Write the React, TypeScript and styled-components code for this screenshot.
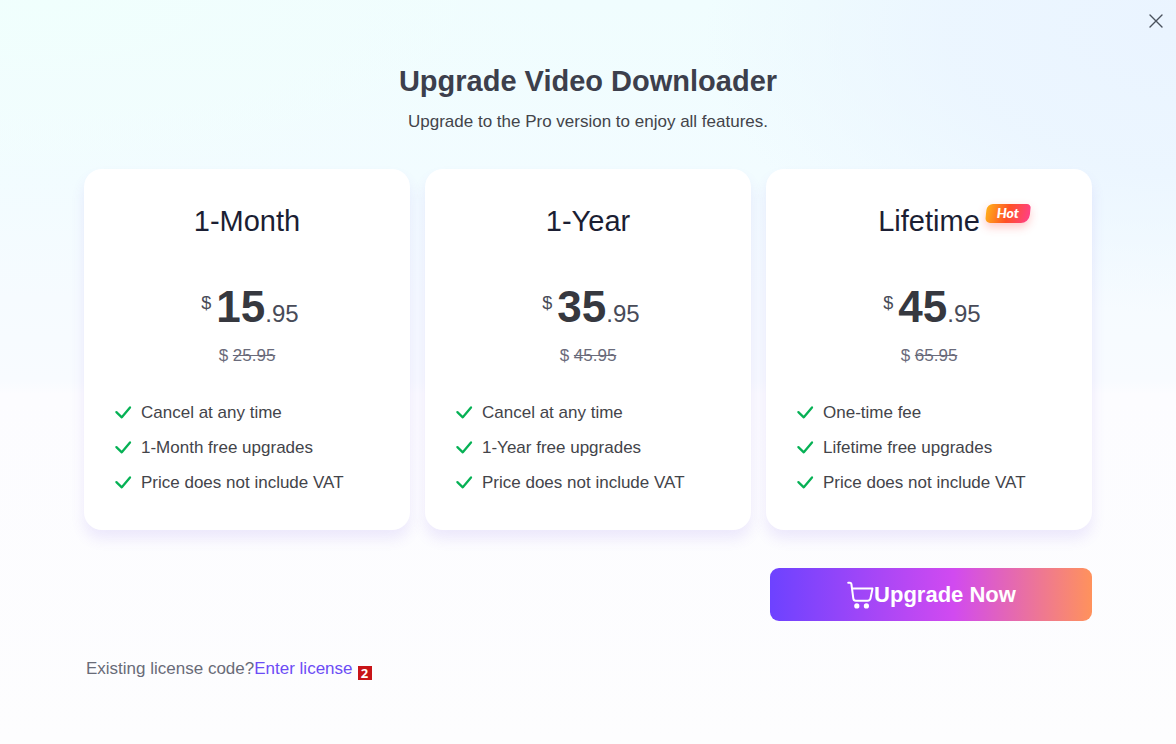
import React from "react";
import styled, { createGlobalStyle } from "styled-components";

const GlobalStyle = createGlobalStyle`
  *, *::before, *::after { box-sizing: border-box; }
  body {
    margin: 0;
    font-family: "Liberation Sans", Arial, sans-serif;
    color: #43444a;
  }
`;

const Page = styled.main`
  position: relative;
  min-height: 100vh;
  padding: 62px 84px 40px;
  background:
    radial-gradient(ellipse 40% 38% at 100% 4%, #eaf4ff 0%, #ebf5ffdd 50%, #f0f9ff00 100%),
    radial-gradient(ellipse 44% 26% at 4% 0%, #f0fffd 0%, #f1fefd99 50%, #f2fdff00 100%),
    linear-gradient(180deg, #f0fdfe 0%, #f2fcff 24%, #f6fbff 40%, #f8fbff 51%, #fcfcff 53%, #fdfdfe 100%);
`;

const CloseButton = styled.button`
  position: absolute;
  top: 9px;
  right: 8px;
  width: 24px;
  height: 24px;
  padding: 0;
  display: grid;
  place-items: center;
  border: 0;
  background: none;
  color: #4a515c;
  cursor: pointer;
`;

const Header = styled.header`
  text-align: center;
`;

const Title = styled.h1`
  margin: 0;
  font-size: 29px;
  line-height: 38px;
  font-weight: 700;
  color: #3c3f4c;
`;

const Subtitle = styled.p`
  margin: 10px 0 0;
  font-size: 17px;
  line-height: 24px;
`;

const Plans = styled.section`
  margin-top: 35px;
  display: grid;
  grid-template-columns: repeat(3, 1fr);
  gap: 15px;
`;

const Card = styled.article`
  padding: 34px 30px 35px;
  border-radius: 18px;
  background: #fff;
  box-shadow: 0 9px 14px rgba(107, 70, 225, 0.11);
`;

const PlanName = styled.h2`
  margin: 0;
  text-align: center;
  font-size: 29px;
  line-height: 36px;
  font-weight: 400;
  color: #1b1e33;
`;

const NameWrap = styled.span`
  position: relative;
`;

const HotBadge = styled.span`
  position: absolute;
  left: calc(100% + 6px);
  top: -1px;
  width: 44px;
  height: 19px;
  text-align: center;
  font: italic 900 14px/17px Lato, sans-serif;
  color: #fff;
  isolation: isolate;

  &::before {
    content: "";
    position: absolute;
    inset: 0;
    z-index: -1;
    transform: skewX(-6deg);
    border-radius: 6px 4px 8px 5px;
    background: linear-gradient(100deg, #ffb01a 0%, #ff5026 50%, #ff3f8b 100%);
    box-shadow: 0 4px 10px rgba(255, 70, 70, 0.3);
  }
`;

const Price = styled.p`
  height: 52px;
  margin: 42px 0 0;
  padding-left: 6px;
  display: flex;
  justify-content: center;
  align-items: baseline;
  line-height: 52px;
  color: #484b58;
`;

const Currency = styled.span`
  align-self: flex-start;
  margin-right: 5px;
  font-size: 18px;
  line-height: 44px;
`;

const Whole = styled.strong`
  font-size: 44px;
  color: #36383f;
`;

const Cents = styled.span`
  font-size: 24px;
`;

const OldPrice = styled.p`
  margin: 11px 0 0;
  text-align: center;
  font-size: 17px;
  line-height: 24px;
  color: #6a6b7b;
`;

const Features = styled.ul`
  margin: 33px 0 0;
  padding: 0;
  display: grid;
  gap: 11px;
  list-style: none;
`;

const Feature = styled.li`
  display: flex;
  align-items: center;
  gap: 9px;
  font-size: 17px;
  line-height: 24px;
`;

const Actions = styled.div`
  margin-top: 38px;
  display: flex;
  justify-content: flex-end;
`;

const UpgradeButton = styled.button`
  width: 322px;
  height: 53px;
  padding: 0;
  display: flex;
  align-items: center;
  justify-content: center;
  border: 0;
  border-radius: 9px;
  background: linear-gradient(90deg, #6d42ff 0%, #d14af0 57%, #ff925c 100%);
  color: #fff;
  font: 700 22px/28px "Liberation Sans", Arial, sans-serif;
  cursor: pointer;
`;

const License = styled.footer`
  margin-top: 36px;
  padding-left: 2px;
  display: flex;
  align-items: center;
  font-size: 17px;
  line-height: 24px;
  color: #696b78;
`;

const LicenseLink = styled.a`
  color: #6c4cf5;
  text-decoration: none;
`;

const Marker = styled.span`
  margin: 7px 0 0 5px;
  width: 14px;
  height: 14px;
  text-align: center;
  font: 700 13px/14px "Open Sans", sans-serif;
  color: #fff;
  background: #c81418;
`;

const CheckIcon = () => (
  <svg width="18" height="18" viewBox="0 0 18 18" fill="none" stroke="#06b155" strokeWidth="2.3" aria-hidden="true">
    <path d="M2.4 8.1 L7.8 13.3 L16 3.5" strokeLinecap="round" strokeLinejoin="round" />
  </svg>
);

const CartIcon = () => (
  <svg width="28" height="28" viewBox="0 0 28 28" fill="none" stroke="#fff" strokeWidth="2" aria-hidden="true">
    <path d="M2.2 1.8 H4 C4.9 1.8 5.2 2.2 5.4 3 L7.3 17.4 C7.5 18.9 8.3 19.7 9.7 19.7 H21.7 C23.2 19.7 24.2 18.9 24.5 17.4 L26.5 7.6 H6" strokeLinecap="round" strokeLinejoin="round" />
    <circle cx="10.8" cy="24.9" r="2.6" fill="#fff" stroke="none" />
    <circle cx="20.4" cy="24.9" r="2.6" fill="#fff" stroke="none" />
  </svg>
);

const CloseIcon = () => (
  <svg width="14" height="14" viewBox="0 0 14 14" fill="none" stroke="currentColor" strokeWidth="1.4" aria-hidden="true">
    <path d="M1 1 L13 13 M13 1 L1 13" strokeLinecap="round" />
  </svg>
);

type Plan = {
  name: string;
  whole: string;
  cents: string;
  old: string;
  features: string[];
  hot?: boolean;
};

const plans: Plan[] = [
  {
    name: "1-Month",
    whole: "15",
    cents: ".95",
    old: "25.95",
    features: ["Cancel at any time", "1-Month free upgrades", "Price does not include VAT"],
  },
  {
    name: "1-Year",
    whole: "35",
    cents: ".95",
    old: "45.95",
    features: ["Cancel at any time", "1-Year free upgrades", "Price does not include VAT"],
  },
  {
    name: "Lifetime",
    whole: "45",
    cents: ".95",
    old: "65.95",
    features: ["One-time fee", "Lifetime free upgrades", "Price does not include VAT"],
    hot: true,
  },
];

const PlanCard = ({ plan }: { plan: Plan }) => (
  <Card>
    <PlanName>
      <NameWrap>
        {plan.name}
        {plan.hot && <HotBadge>Hot</HotBadge>}
      </NameWrap>
    </PlanName>
    <Price>
      <Currency>$</Currency>
      <Whole>{plan.whole}</Whole>
      <Cents>{plan.cents}</Cents>
    </Price>
    <OldPrice>
      $ <s>{plan.old}</s>
    </OldPrice>
    <Features>
      {plan.features.map((text) => (
        <Feature key={text}>
          <CheckIcon />
          {text}
        </Feature>
      ))}
    </Features>
  </Card>
);

export default function App() {
  return (
    <>
      <GlobalStyle />
      <Page>
        <CloseButton type="button" aria-label="Close">
          <CloseIcon />
        </CloseButton>
        <Header>
          <Title>Upgrade Video Downloader</Title>
          <Subtitle>Upgrade to the Pro version to enjoy all features.</Subtitle>
        </Header>
        <Plans>
          {plans.map((plan) => (
            <PlanCard key={plan.name} plan={plan} />
          ))}
        </Plans>
        <Actions>
          <UpgradeButton type="button">
            <CartIcon />
            Upgrade Now
          </UpgradeButton>
        </Actions>
        <License>
          Existing license code?
          <LicenseLink href="#license">Enter license</LicenseLink>
          <Marker>2</Marker>
        </License>
      </Page>
    </>
  );
}
